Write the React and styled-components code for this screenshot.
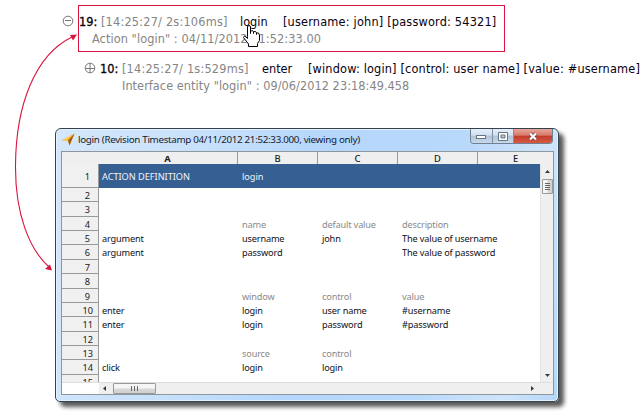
import React from "react";
import styled, { createGlobalStyle } from "styled-components";

const GlobalStyle = createGlobalStyle`
  * { box-sizing: border-box; }
  body { margin: 0; background: #fff; overflow: hidden; }
`;

const Page = styled.main`
  position: relative;
  width: 643px;
  height: 417px;
  overflow: hidden;
  background: #fff;
  padding-top: 5px;
  font-family: "DejaVu Sans Condensed", "DejaVu Sans", sans-serif;
  font-stretch: condensed;
`;

const LogEntry = styled.section`
  display: flex;
  align-items: flex-start;
  height: 47px;
  margin-left: ${(p) => p.$indent}px;
`;

const ToggleIcon = styled.svg`
  flex: none;
  width: 12px;
  height: 12px;
  margin: 10px 4px 0 0;
  fill: none;
  stroke: #777;
  stroke-width: 1;
`;

const EntryBody = styled.div`
  flex: none;
  width: ${(p) => (p.$framed ? "427px" : "545px")};
  height: 47px;
  padding-top: ${(p) => (p.$framed ? 7 : 8)}px;
  border: ${(p) => (p.$framed ? "1px solid #d9143f" : "0")};
`;

const LogLine = styled.div`
  display: flex;
  height: 17px;
  padding-left: ${(p) => p.$pad || 0}px;
  font-size: 12.6px;
  line-height: 17px;
  white-space: pre;
`;

const Segment = styled.span`
  flex: none;
  width: ${(p) => p.$w}px;
  color: ${(p) => (p.$muted ? "#858585" : "#080010")};
  letter-spacing: ${(p) => p.$ls || 0}px;
`;

const LineNumber = styled(Segment)`
  -webkit-text-stroke: 0.3px #000;
`;

const Window = styled.section`
  display: flex;
  flex-direction: column;
  width: 504px;
  height: 274px;
  margin: 29px 0 0 55px;
  padding: 0 5px 6px;
  border: 1px solid #35424e;
  border-radius: 6px 6px 5px 5px;
  background: linear-gradient(100deg, #d5e7fa 0%, #c7e0fb 28%, #b5d7fb 50%, #b9d9fb 75%, #cfe4f9 90%, #b5d8f8 100%);
  box-shadow: inset 0 0 0 1px #e4f2ff, 5px 5px 4px rgba(0, 0, 0, 0.65);
  font-family: "Noto Sans", "Open Sans", sans-serif;
  font-stretch: normal;
`;

const TitleBar = styled.header`
  display: flex;
  height: 22px;
  flex: none;
`;

const AppIcon = styled.svg`
  width: 14px;
  height: 14px;
  margin: 4px 3px 0 0;
`;

const Title = styled.h1`
  flex: 1;
  margin: 0;
  font-size: 9.8px;
  font-weight: 400;
  line-height: 22px;
  letter-spacing: -0.31px;
  white-space: nowrap;
  color: #17202c;
`;

const WindowButtons = styled.div`
  display: flex;
  width: 83px;
  height: 15px;
  border: 1px solid #71808e;
  border-top: 0;
  border-radius: 0 0 4px 4px;
  overflow: hidden;
`;

const WindowButton = styled.span`
  display: flex;
  align-items: center;
  justify-content: center;
  width: ${(p) => (p.$close ? 38 : 22)}px;
  border-right: ${(p) => (p.$close ? "0" : "1px solid #8290a0")};
  background: ${(p) =>
    p.$close
      ? "linear-gradient(#e5a79a 0%, #d9796a 45%, #c23c2b 50%, #d65a45 100%)"
      : "linear-gradient(#e3eefa 0%, #cfdff0 45%, #afc3d9 50%, #c8daed 100%)"};
`;

const Client = styled.div`
  display: grid;
  grid-template-columns: 1fr 13px;
  grid-template-rows: 12px 218px 12px;
  width: 493px;
  height: 244px;
  border: 1px solid #8e979e;
  background: #efefef;
  overflow: hidden;
`;

const ColumnHeads = styled.div`
  grid-column: 1 / 3;
  display: grid;
  grid-template-columns: 36px 140px 80px 80px 80px 1fr;
  background: #efefef;
`;

const ColumnHead = styled.span`
  border-right: ${(p) => (p.$line ? "1px solid #9a9a9a" : "0")};
  font-size: 9.4px;
  font-weight: ${(p) => (p.$bold ? 700 : 500)};
  line-height: 13px;
  text-align: center;
  color: #222;
`;

const Sheet = styled.div`
  overflow: hidden;
  background: #fff;
`;

const Row = styled.div`
  display: grid;
  grid-template-columns: 37px 140px 80px 80px 1fr;
  grid-template-rows: 100%;
  height: ${(p) => (p.$banner ? 24 : 14.36)}px;
  line-height: ${(p) => (p.$banner ? 25 : 15.4)}px;
  font-size: 9.2px;
  color: ${(p) => (p.$banner ? "#f0f4fa" : p.$caption ? "#8a8a8a" : "#101020")};
  background: ${(p) => (p.$banner ? "#365f92" : "#fff")};
`;

const RowHead = styled.span`
  padding-right: ${(p) => (p.$wide ? 5 : 8)}px;
  border-right: 1px solid #999;
  border-bottom: 1px solid #999;
  background: #f0f0f0;
  text-align: right;
  color: #222;
`;

const Cell = styled.span`
  padding-left: 3px;
  white-space: nowrap;
  letter-spacing: ${(p) => (p.$banner ? -0.03 : -0.16)}px;
`;

const VScroll = styled.div`
  display: flex;
  flex-direction: column;
  align-items: center;
  justify-content: space-between;
  padding: 5px 0 4px;
  border-left: 1px solid #e3e3e3;
  background: #efefef;
`;

const ScrollTop = styled.div`
  display: flex;
  flex-direction: column;
  align-items: center;
  gap: 5px;
`;

const Thumb = styled.div`
  display: flex;
  align-items: center;
  justify-content: center;
  width: ${(p) => (p.$wide ? 43 : 11)}px;
  height: ${(p) => (p.$wide ? 11 : 15)}px;
  border: 1px solid #999;
  border-radius: 1px;
  background: ${(p) => `linear-gradient(${p.$wide ? "180deg" : "90deg"}, #f6f6f6 45%, #d8d8d8 55%, #d0d0d0)`};
`;

const HScroll = styled.div`
  grid-column: 1 / 3;
  display: flex;
  align-items: center;
  border-top: 1px solid #ddd;
  background: linear-gradient(90deg, #fff 37px, #efefef 37px);
  padding: 0 18px 0 40px;
  gap: 6px;
`;

const Arrow = styled.svg`
  flex: none;
  width: 5px;
  height: 5px;
  fill: #333944;
  transform: rotate(${(p) => p.$turn || 0}deg);
  margin-left: ${(p) => (p.$end ? "auto" : "0")};
`;

const Overlay = styled.svg`
  position: absolute;
  left: 0;
  top: 0;
  pointer-events: none;
`;

const ROWS = [
  { n: 2 },
  { n: 3 },
  { n: 4, caption: true, cells: ["", "name", "default value", "description"] },
  { n: 5, cells: ["argument", "username", "john", "The value of username"] },
  { n: 6, cells: ["argument", "password", "", "The value of password"] },
  { n: 7 },
  { n: 8 },
  { n: 9, caption: true, cells: ["", "window", "control", "value"] },
  { n: 10, cells: ["enter", "login", "user name", "#username"] },
  { n: 11, cells: ["enter", "login", "password", "#password"] },
  { n: 12 },
  { n: 13, caption: true, cells: ["", "source", "control", ""] },
  { n: 14, cells: ["click", "login", "login", ""] },
  { n: 15 },
];

function Toggle({ plus }) {
  return (
    <ToggleIcon viewBox="0 0 12 12">
      <circle cx="6" cy="6" r="4.8" />
      <path d={plus ? "M1.5 6.5H10.5M6 1.5V10.5" : "M3 5.5H9"} />
    </ToggleIcon>
  );
}

function SheetRow({ n, banner, caption, cells = ["", "", "", ""] }) {
  return (
    <Row $banner={banner} $caption={caption}>
      <RowHead $wide={n > 9}>{n}</RowHead>
      {cells.map((text, i) => (
        <Cell key={i} $banner={banner}>{text}</Cell>
      ))}
    </Row>
  );
}

function ScrollArrow({ turn, end }) {
  return (
    <Arrow $turn={turn} $end={end} viewBox="0 0 5 5">
      <path d="M0 4L2.5 1L5 4Z" />
    </Arrow>
  );
}

export default function App() {
  return (
    <Page>
      <GlobalStyle />
      <LogEntry $indent={62}>
        <Toggle />
        <EntryBody $framed>
          <LogLine>
            <LineNumber $w={22}>19:</LineNumber>
            <Segment $w={139} $ls={0.2} $muted>[14:25:27/ 2s:106ms]</Segment>
            <Segment $w={43}>login</Segment>
            <Segment $w={215} $ls={0.19}>[username: john] [password: 54321]</Segment>
          </LogLine>
          <LogLine $pad={13}>
            <Segment $w={232} $ls={0.08} $muted>Action "login" : 04/11/2012 21:52:33.00</Segment>
          </LogLine>
        </EntryBody>
      </LogEntry>
      <LogEntry $indent={84}>
        <Toggle plus />
        <EntryBody>
          <LogLine>
            <LineNumber $w={22}>10:</LineNumber>
            <Segment $w={140} $ls={0.2} $muted>[14:25:27/ 1s:529ms]</Segment>
            <Segment $w={46}>enter</Segment>
            <Segment $w={334} $ls={0.17}>[window: login] [control: user name] [value: #username]</Segment>
          </LogLine>
          <LogLine $pad={22}>
            <Segment $w={290} $ls={0.05} $muted>Interface entity "login" : 09/06/2012 23:18:49.458</Segment>
          </LogLine>
        </EntryBody>
      </LogEntry>
      <Window>
        <TitleBar>
          <AppIcon viewBox="0 0 14 14">
            <path d="M0.5 7.5L13.5 0.5L8.5 12.5L7 7.5Z" fill="#f4a51c" />
            <path d="M7 7.5L13.5 0.5L8.5 12.5Z" fill="#a65b16" />
            <path d="M1 7.3L12 1.7L6.5 6.5Z" fill="#ffd34d" />
          </AppIcon>
          <Title>login (Revision Timestamp 04/11/2012 21:52:33.000, viewing only)</Title>
          <WindowButtons>
            <WindowButton>
              <svg width="12" height="8" viewBox="0 0 12 8">
                <rect x="1.5" y="3.5" width="9" height="3" fill="#fff" stroke="#69737e" />
              </svg>
            </WindowButton>
            <WindowButton>
              <svg width="10" height="9" viewBox="0 0 10 9">
                <path d="M.5 .5H9.5V8.5H.5ZM3 3V6H7V3Z" fill="#fff" fillRule="evenodd" stroke="#69737e" />
              </svg>
            </WindowButton>
            <WindowButton $close>
              <svg width="10" height="9" viewBox="0 0 10 9">
                <path d="M2 1.5L8 7.5M8 1.5L2 7.5" stroke="#70434a" strokeWidth="3.6" />
                <path d="M2 1.5L8 7.5M8 1.5L2 7.5" stroke="#fff" strokeWidth="2.2" />
              </svg>
            </WindowButton>
          </WindowButtons>
        </TitleBar>
        <Client>
          <ColumnHeads>
            <ColumnHead />
            <ColumnHead $line $bold>A</ColumnHead>
            <ColumnHead $line>B</ColumnHead>
            <ColumnHead $line>C</ColumnHead>
            <ColumnHead $line>D</ColumnHead>
            <ColumnHead>E</ColumnHead>
          </ColumnHeads>
          <Sheet>
            <SheetRow n={1} banner cells={["ACTION DEFINITION", "login", "", ""]} />
            {ROWS.map((row) => (
              <SheetRow key={row.n} {...row} />
            ))}
          </Sheet>
          <VScroll>
            <ScrollTop>
              <ScrollArrow />
              <Thumb>
                <svg width="5" height="7" viewBox="0 0 5 7">
                  <path d="M0 .5H5M0 2.5H5M0 4.5H5M0 6.5H5" stroke="#666" />
                </svg>
              </Thumb>
            </ScrollTop>
            <ScrollArrow turn={180} />
          </VScroll>
          <HScroll>
            <ScrollArrow turn={270} />
            <Thumb $wide>
              <svg width="7" height="5" viewBox="0 0 7 5">
                <path d="M.5 0V5M3.5 0V5M6.5 0V5" stroke="#666" />
              </svg>
            </Thumb>
            <ScrollArrow turn={90} end />
          </HScroll>
        </Client>
      </Window>
      <Overlay width="643" height="417" viewBox="0 0 643 417">
        <path d="M72 37C35 55 16 105 15.5 165C15 215 30 250 49 267" fill="none" stroke="#d9143f" strokeWidth="1.1" />
        <path d="M77 34.5L70 35L73 40.5Z" fill="#d9143f" />
        <path d="M52 270.5L45 269L50 264.5Z" fill="#d9143f" />
        <path
          d="M247.500 36.500V27Q247.500 25.500 249 25.500Q250.500 25.500 250.500 27V33.500V31.500Q252 29.500 253.500 31.500V33.500V32Q255 30.500 256.500 32.500V34.500V33Q259 32 259.500 35V40.500L257.500 43.500V46.500H248.500V44L243.500 37.500Q244 34.500 247.500 38.500Z"
          fill="#fff"
          stroke="#000"
        />
      </Overlay>
    </Page>
  );
}
